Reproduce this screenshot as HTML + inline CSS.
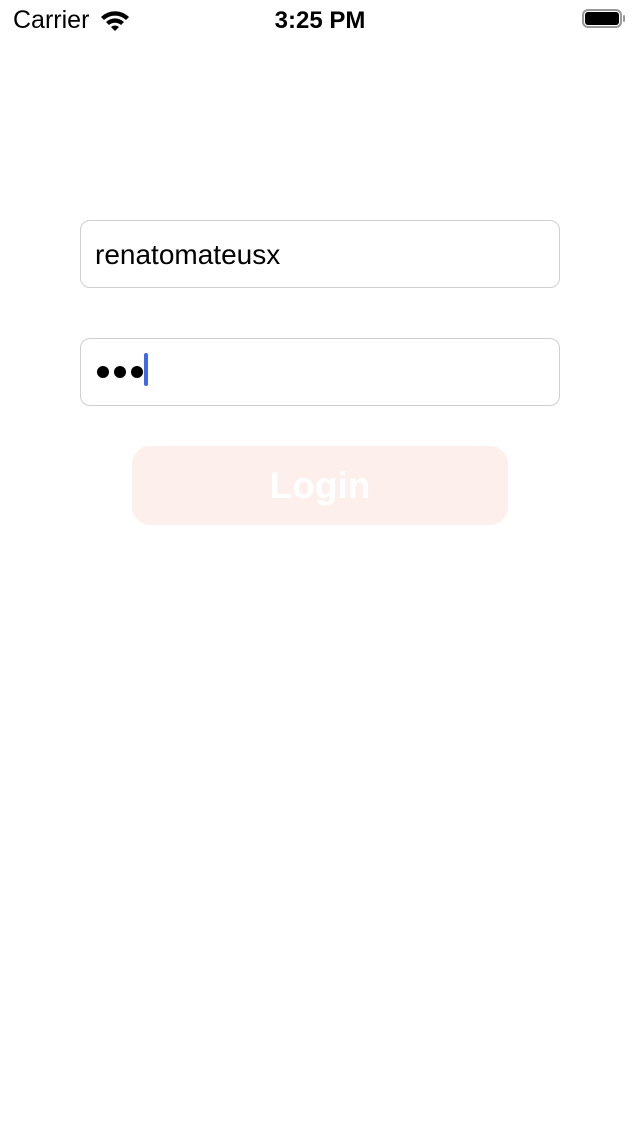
<!DOCTYPE html>
<html><head><meta charset="utf-8"><style>
body{margin:0;width:640px;height:1136px;background:#fff;font-family:"Liberation Sans",sans-serif;position:relative;overflow:hidden}
.abs{position:absolute}
.field{position:absolute;left:80px;width:478px;height:66px;border:1px solid #cfcfcf;border-radius:10px;background:#fff}
</style></head><body>
<div class="abs" style="left:13px;top:6px;font-size:25px;color:#000">Carrier</div>
<svg class="abs" style="left:99px;top:9px" width="32" height="24" viewBox="0 0 32 24">
<path d="M2 8 A20 20 0 0 1 30 8 L27 11 A16 16 0 0 0 5 11Z" fill="#000"/>
<path d="M7 13 A13 13 0 0 1 25 13 L22 16 A9 9 0 0 0 10 16Z" fill="#000"/>
<path d="M12 18 A6 6 0 0 1 20 18 L16 22Z" fill="#000"/>
</svg>
<div class="abs" style="left:0;width:640px;top:7px;text-align:center;font-size:24px;font-weight:bold">3:25 PM</div>
<div class="abs" style="left:582px;top:9px;width:40px;height:19px;border:2px solid #999;border-radius:6px;box-sizing:border-box"></div>
<div class="abs" style="left:585px;top:12px;width:34px;height:13px;background:#000;border-radius:3px"></div>
<div class="abs" style="left:623px;top:15px;width:2px;height:7px;background:#999;border-radius:1px"></div>
<div class="field" style="top:220px"><div class="abs" style="left:14px;top:18px;font-size:28px">renatomateusx</div></div>
<div class="field" style="top:338px">
<div class="abs" style="left:16px;top:27px;width:12px;height:12px;border-radius:50%;background:#000"></div>
<div class="abs" style="left:33px;top:27px;width:12px;height:12px;border-radius:50%;background:#000"></div>
<div class="abs" style="left:50px;top:27px;width:12px;height:12px;border-radius:50%;background:#000"></div>
<div class="abs" style="left:63px;top:14px;width:4px;height:33px;border-radius:2px;background:#3f67f0"></div>
</div>
<div class="abs" style="left:132px;top:446px;width:376px;height:79px;border-radius:18px;background:#fdefec;color:#fff;font-size:37px;font-weight:bold;text-align:center;line-height:79px">Login</div>
</body></html>
